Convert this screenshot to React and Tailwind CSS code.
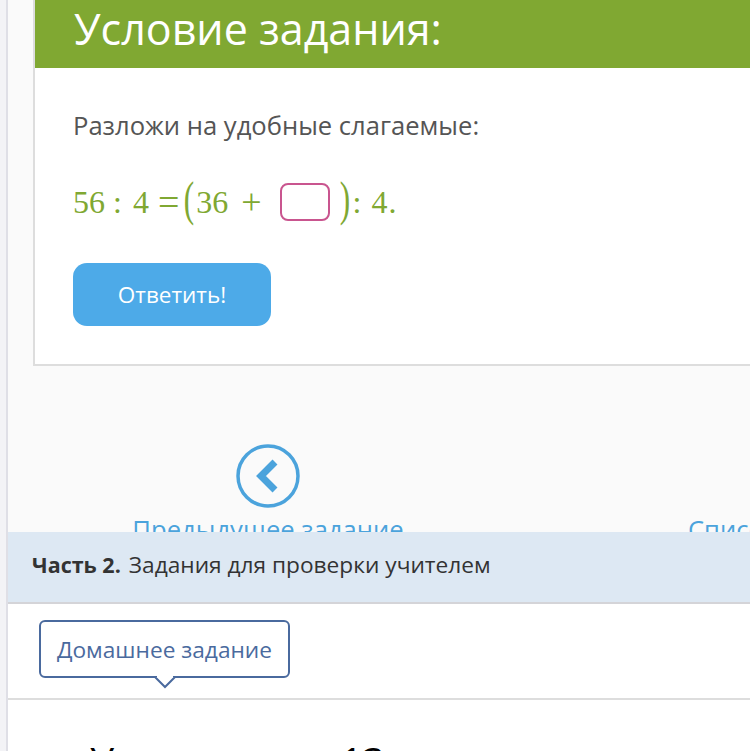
const App = () => {
  return (
    <div className="h-[751px] overflow-hidden flex bg-white font-['Open_Sans',sans-serif]">
      <div className="w-[8px] shrink-0 bg-[#f3f3f6] border-r-2 border-[#dfdfe6]" />
      <div className="flex-1 min-w-0 flex flex-col overflow-hidden">
        {/* task */}
        <div className="h-[532px] shrink-0 overflow-hidden bg-[#fafafa] pl-[25px]">
          <div className="w-[760px] bg-white border-l-2 border-b-2 border-[#dddddd]">
            <div className="h-[68px] bg-[#80a832] pl-[39px] text-white text-[43px] leading-[58px]">Условие задания:</div>
            <div className="pl-[38px] h-[296px]">
              <p className="pt-[42px] text-[25.6px] leading-[32px] text-[#555555]">Разложи на удобные слагаемые:</p>
              <div className="mt-[37px] h-[46px] flex items-center font-['Liberation_Serif',serif] text-[32px] text-[#80a832]">
                <span>56</span>
                <span className="ml-[8px]">:</span>
                <span className="ml-[11px]">4</span>
                <span className="ml-[9px] text-[38px]">=</span>
                <span className="ml-[2px] -mt-[6px] text-[48px] font-light leading-[46px] scale-x-[0.65]">(</span>
                <span className="-ml-[1px]">36</span>
                <span className="ml-[13px] text-[36px]">+</span>
                <span className="ml-[18px] w-[50px] h-[38px] rounded-[8px] border-2 border-[#c9558f] bg-white" />
                <span className="ml-[7px] -mt-[6px] text-[48px] font-light leading-[46px] scale-x-[0.65]">)</span>
                <span>:</span>
                <span className="ml-[10px]">4</span>
                <span className="ml-[1px]">.</span>
              </div>
              <button className="mt-[38px] w-[198px] h-[63px] rounded-[14px] bg-[#4daae8] text-white text-[22.5px]">Ответить!</button>
            </div>
          </div>
          <div className="flex mt-[77px] text-[25.6px] leading-[32px] text-[#4ba3dc]">
            <div className="ml-[100px] w-[270px] flex flex-col items-center shrink-0">
              <svg width="66" height="66" viewBox="0 0 66 66" fill="none">
                <circle cx="33" cy="33" r="30" stroke="#4ba3dc" strokeWidth="3.5" />
                <path d="M40 19 L26 33 L40 47" stroke="#4ba3dc" strokeWidth="7" />
              </svg>
              <span className="mt-[5px] whitespace-nowrap">Предыдущее задание</span>
            </div>
            <span className="ml-[285px] mt-[71px] whitespace-nowrap">Список заданий</span>
          </div>
        </div>
        {/* part 2 */}
        <div className="h-[72px] shrink-0 flex items-center bg-[#dde8f3] border-b-2 border-[#d4d4d8] pl-[24px] pb-[4px] text-[22.7px] text-[#333333]">
          <b className="mr-[8px] text-[21.5px]">Часть 2.</b> Задания для проверки учителем
        </div>
        <div className="h-[96px] shrink-0 border-b-2 border-[#dddddd] pl-[31px] pt-[16px]">
          <div className="relative w-[251px] h-[58px] pt-[2px] flex items-center justify-center rounded-[6px] border-2 border-[#4a6a9e] text-[22.7px] text-[#4a6a9e]">
            Домашнее задание
            <svg className="absolute left-[113px] top-[54px]" width="22" height="14" viewBox="0 0 22 14" fill="none">
              <path d="M1 1 L11 11 L21 1" fill="white" stroke="#4a6a9e" strokeWidth="2" />
              <path d="M3 0 H19" stroke="white" strokeWidth="3" />
            </svg>
          </div>
        </div>
        <div className="pl-[82px] pt-[39px] text-[39px] leading-[44px] text-black whitespace-nowrap">Упражнение 13</div>
      </div>
    </div>
  );
};

export default App;
